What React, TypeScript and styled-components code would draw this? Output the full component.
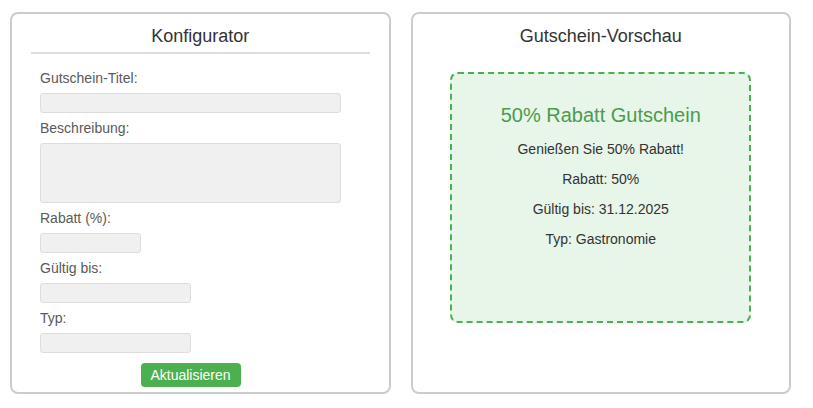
import React from "react";
import styled, { createGlobalStyle } from "styled-components";

const GlobalStyle = createGlobalStyle`
  html, body {
    margin: 0;
    padding: 0;
    background: #ffffff;
    font-family: "Liberation Sans", Arial, sans-serif;
  }
  * { box-sizing: border-box; }
`;

const Page = styled.div`
  display: flex;
  align-items: stretch;
  gap: 20px;
  padding: 12px 10px;
`;

const Panel = styled.section`
  width: 380.5px;
  border: 2px solid #cccccc;
  border-radius: 8px;
  background: #ffffff;
  display: flex;
  flex-direction: column;
`;

const PanelTitle = styled.h2<{ $underline?: boolean }>`
  margin: 12px 19px 0;
  padding-bottom: 5px;
  border-bottom: 2px solid ${(p) => (p.$underline ? "#dddddd" : "transparent")};
  font-size: 18px;
  line-height: 21px;
  font-weight: normal;
  color: #333333;
  text-align: center;
`;

const Form = styled.form`
  width: 301px;
  margin-left: 28px;
  padding: 9px 0 5px;
  display: flex;
  flex-direction: column;
`;

const Label = styled.label`
  display: block;
  margin: 7px 0;
  font-size: 14px;
  line-height: 16px;
  color: #5a5a5a;
`;

const Field = styled.input<{ $width: number }>`
  display: block;
  width: ${(p) => p.$width}px;
  height: 20px;
  margin: 0;
  padding: 0 5px;
  background: #f0f0f0;
  border: 1px solid #dddddd;
  border-radius: 3px;
  font-family: inherit;
  font-size: 13px;
  outline: none;
`;

const TextArea = styled.textarea`
  display: block;
  width: 301px;
  height: 60px;
  margin: 0;
  padding: 3px 5px;
  background: #f0f0f0;
  border: 1px solid #dddddd;
  border-radius: 3px;
  resize: none;
  font-family: inherit;
  font-size: 13px;
  outline: none;
`;

const Button = styled.button`
  align-self: center;
  margin-top: 10px;
  width: 100px;
  height: 24px;
  padding: 0;
  border: none;
  border-radius: 4px;
  background: #4caf50;
  color: #ffffff;
  font-family: inherit;
  font-size: 14px;
  line-height: 16px;
  cursor: pointer;
`;

const Coupon = styled.div`
  width: 301px;
  height: 251px;
  margin: 18px auto 0;
  padding: 20px;
  border: 2px dashed #4caf50;
  border-radius: 8px;
  background: #e8f5e9;
  text-align: center;
`;

const CouponTitle = styled.h3`
  margin: 10px 0 14px;
  font-size: 20px;
  line-height: 23px;
  font-weight: normal;
  color: #4a9c4e;
`;

const CouponLine = styled.p`
  margin: 14px 0;
  font-size: 14px;
  line-height: 16px;
  color: #333333;
`;

export default function App() {
  return (
    <>
      <GlobalStyle />
      <Page>
        <Panel>
          <PanelTitle $underline>Konfigurator</PanelTitle>
          <Form onSubmit={(e) => e.preventDefault()}>
            <Label htmlFor="titel">Gutschein-Titel:</Label>
            <Field id="titel" type="text" $width={301} />
            <Label htmlFor="beschreibung">Beschreibung:</Label>
            <TextArea id="beschreibung" />
            <Label htmlFor="rabatt">Rabatt (%):</Label>
            <Field id="rabatt" type="text" $width={101} />
            <Label htmlFor="gueltig">Gültig bis:</Label>
            <Field id="gueltig" type="text" $width={151} />
            <Label htmlFor="typ">Typ:</Label>
            <Field id="typ" type="text" $width={151} />
            <Button type="submit">Aktualisieren</Button>
          </Form>
        </Panel>
        <Panel>
          <PanelTitle>Gutschein-Vorschau</PanelTitle>
          <Coupon>
            <CouponTitle>50% Rabatt Gutschein</CouponTitle>
            <CouponLine>Genießen Sie 50% Rabatt!</CouponLine>
            <CouponLine>Rabatt: 50%</CouponLine>
            <CouponLine>Gültig bis: 31.12.2025</CouponLine>
            <CouponLine>Typ: Gastronomie</CouponLine>
          </Coupon>
        </Panel>
      </Page>
    </>
  );
}
